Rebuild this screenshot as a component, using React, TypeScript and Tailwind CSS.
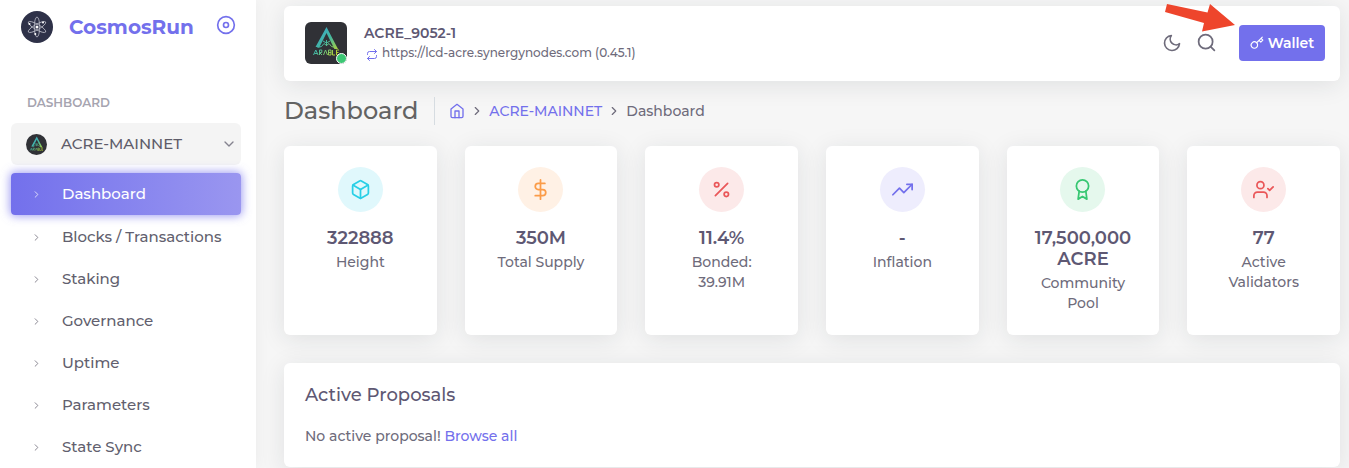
import type { ReactNode } from "react";
import {
  FiAward,
  FiBox,
  FiChevronDown,
  FiChevronRight,
  FiDisc,
  FiDollarSign,
  FiHome,
  FiKey,
  FiMoon,
  FiPercent,
  FiRepeat,
  FiSearch,
  FiTrendingUp,
  FiUserCheck,
} from "react-icons/fi";

const menu = ["Dashboard", "Blocks / Transactions", "Staking", "Governance", "Uptime", "Parameters", "State Sync"];

type Stat = { icon: ReactNode; tint: string; value: string; label: string };

const stats: Stat[] = [
  { icon: <FiBox />, tint: "bg-[#e0f8fc] text-[#28cfe6]", value: "322888", label: "Height" },
  { icon: <FiDollarSign />, tint: "bg-[#fff1e5] text-[#fb9c48]", value: "350M", label: "Total Supply" },
  { icon: <FiPercent />, tint: "bg-[#fce9e9] text-[#ea5759]", value: "11.4%", label: "Bonded: 39.91M" },
  { icon: <FiTrendingUp />, tint: "bg-[#eeedfd] text-[#7370ec]", value: "-", label: "Inflation" },
  { icon: <FiAward />, tint: "bg-[#e5f8ed] text-[#37c772]", value: "17,500,000 ACRE", label: "Community Pool" },
  { icon: <FiUserCheck />, tint: "bg-[#fce9e9] text-[#ea5759]", value: "77", label: "Active Validators" },
];

function CosmosLogo() {
  return (
    <svg viewBox="0 0 32 32" className="size-8 shrink-0" aria-hidden="true">
      <circle cx="16" cy="16" r="16" fill="#2e3148" />
      <g fill="none" stroke="#b9bac6" strokeWidth="0.8">
        <ellipse cx="16" cy="16" rx="2.7" ry="10" />
        <ellipse cx="16" cy="16" rx="2.7" ry="10" transform="rotate(60 16 16)" />
        <ellipse cx="16" cy="16" rx="2.7" ry="10" transform="rotate(120 16 16)" />
      </g>
      <g fill="#fff">
        <circle cx="16" cy="16" r="1.5" />
        <circle cx="8.5" cy="13" r="1" />
        <circle cx="22" cy="11.5" r="1" />
        <circle cx="14.3" cy="23" r="1" />
      </g>
    </svg>
  );
}

function ArableLogo({ id, className }: { id: string; className: string }) {
  return (
    <svg viewBox="0 0 42 42" className={className} aria-hidden="true">
      <defs>
        <linearGradient id={id} x1="10" y1="10" x2="32" y2="30" gradientUnits="userSpaceOnUse">
          <stop offset="0" stopColor="#3aa6c9" />
          <stop offset="0.5" stopColor="#45b8a0" />
          <stop offset="1" stopColor="#b5d334" />
        </linearGradient>
      </defs>
      <rect width="42" height="42" fill="#303136" />
      <path fill={`url(#${id})`} d="M21.5 5 33 27h-3.6L21.500 11 14.500 25h-4z" />
      <g fill="none" stroke={`url(#${id})`} strokeWidth="1">
        <path d="M21.500 24v-6M21.500 21l-3.500-2M21.500 21l3.500-2M12.500 25.500l4-1 2.500-3 2.500 2 2.500-2 2.500 3 4 1" />
        <path d="m8.500 33 2.300-5 2.300 5M9.500 31.500h3M14.500 33v-5h2.300v2.500h-2.300l2.500 2.500M18.500 33l2-5 2 5M23.500 28v5h2.500v-5h-2.500M23.500 30.500H26M27.500 28v5h2.500M34 28h-2.500v5H34M31.500 30.500h2" />
      </g>
    </svg>
  );
}

function Sidebar() {
  return (
    <aside className="flex w-64 shrink-0 flex-col bg-white px-[11px] shadow-[0_0_15px_rgba(34,41,47,0.05)]">
      <div className="flex items-center pt-[11px] pl-[10px]">
        <CosmosLogo />
        <a href="#home" className="ml-4 text-xl leading-8 font-bold text-[#7370ec]">
          CosmosRun
        </a>
        <button type="button" aria-label="Collapse menu" className="mr-[9px] mb-1 ml-auto text-[#7370ec]">
          <FiDisc size={20} />
        </button>
      </div>
      <h2 className="mt-[50px] pl-4 text-xs leading-5 font-semibold text-[#a6a4b0]">DASHBOARD</h2>
      <nav className="mt-[10px] mr-1 text-[15px] font-medium">
        <button type="button" className="mb-2 flex h-[42px] w-full items-center rounded-md bg-[#f4f4f4] pr-1 pl-[15px] text-[#5e5c69]">
          <ArableLogo id="group-logo" className="size-[21px] rounded-full" />
          <span className="ml-[14px]">ACRE-MAINNET</span>
          <FiChevronDown size={16} className="ml-auto text-[#85838f]" />
        </button>
        {menu.map((item, index) => (
          <a
            key={item}
            href={`#${index}`}
            aria-current={index === 0 ? "page" : undefined}
            className={
              index === 0
                ? "mb-px flex h-[42px] items-center rounded bg-linear-to-r from-[#7370ec] to-[#9a96f0] pl-5 text-white shadow-[0_0_10px_1px_rgba(115,112,236,0.7)]"
                : "flex h-[42px] items-center pl-5 text-[#625f6e]"
            }
          >
            <FiChevronRight size={11} className="shrink-0 opacity-80" />
            <span className="ml-5 whitespace-nowrap">{item}</span>
          </a>
        ))}
      </nav>
    </aside>
  );
}

function TopBar() {
  return (
    <header className="flex h-[75px] items-center rounded-md bg-white pr-[15px] pb-0.5 pl-[21px] shadow-[0_4px_24px_rgba(34,41,47,0.1)]">
      <div className="relative">
        <ArableLogo id="chain-logo" className="size-[42px] rounded-md" />
        <span className="absolute right-0 bottom-0 size-[11px] rounded-full border border-white bg-[#3cc774]" />
      </div>
      <div className="ml-[17px] text-[#6e6b7b]">
        <p className="text-sm leading-5 font-semibold text-[#5e5873]">ACRE_9052-1</p>
        <p className="flex items-center gap-1 text-xs leading-5 font-medium">
          <FiRepeat size={12} className="mt-1 ml-0.5 text-[#7370ec]" />
          https://lcd-acre.synergynodes.com (0.45.1)
        </p>
      </div>
      <div className="ml-auto flex items-center text-[#6e6b7b]">
        <button type="button" aria-label="Dark mode">
          <FiMoon size={20} />
        </button>
        <button type="button" aria-label="Search" className="ml-[14px]">
          <FiSearch size={21} />
        </button>
        <div className="relative ml-[22px]">
          <button type="button" className="flex h-9 w-[86px] items-center justify-center gap-1 rounded bg-[#7370ec] text-sm font-semibold text-white">
            <FiKey size={14} />
            Wallet
          </button>
          <svg viewBox="0 0 70 28" className="absolute right-full bottom-full mr-1 -mb-[7px] h-7 w-[70px]" aria-hidden="true">
            <path fill="#ee452c" d="M2 0 42.500 8.500 45 0 70 21 37 27.500 39 19 0 8z" />
          </svg>
        </div>
      </div>
    </header>
  );
}

function Breadcrumb() {
  return (
    <div className="mt-4 flex h-7 items-center text-[#6e6b7b]">
      <h1 className="text-2xl leading-7 font-medium text-[#636363]">Dashboard</h1>
      <nav aria-label="Breadcrumb" className="ml-4 flex h-7 items-center border-l border-[#d6dce1] pl-[14px] text-sm font-medium">
        <a href="#home" aria-label="Home" className="text-[#7370ec]">
          <FiHome size={16} />
        </a>
        <FiChevronRight size={14} className="mx-[5px]" />
        <a href="#chain" className="text-[#7370ec]">
          ACRE-MAINNET
        </a>
        <FiChevronRight size={14} className="mx-[5px]" />
        <span>Dashboard</span>
      </nav>
    </div>
  );
}

function StatCard({ icon, tint, value, label }: Stat) {
  return (
    <article className="flex min-h-[189px] flex-col items-center rounded-md bg-white px-5 py-[21px] text-center shadow-[0_4px_24px_rgba(34,41,47,0.1)]">
      <div className={`flex size-[45px] items-center justify-center rounded-full text-[21px] ${tint}`}>{icon}</div>
      <h2 className="mt-4 text-lg leading-[21px] font-semibold text-[#5e5873]">{value}</h2>
      <p className="mt-[3px] px-3 text-sm leading-5 font-medium text-[#6e6b7b]">{label}</p>
    </article>
  );
}

export default function App() {
  return (
    <div className="flex h-screen overflow-hidden bg-[#f6f6f6] font-[Montserrat,Inter,sans-serif]">
      <Sidebar />
      <main className="min-w-0 flex-1 pt-1.5 pr-[9px] pl-7">
        <TopBar />
        <Breadcrumb />
        <section className="mt-[21px] grid grid-cols-6 gap-7">
          {stats.map((stat) => (
            <StatCard key={stat.label} {...stat} />
          ))}
        </section>
        <section className="mt-7 rounded-md bg-white p-[21px] shadow-[0_4px_24px_rgba(34,41,47,0.1)]">
          <h2 className="text-lg leading-[22px] font-medium text-[#5e5873]">Active Proposals</h2>
          <p className="mt-5 text-sm leading-5 font-medium text-[#6e6b7b]">
            No active proposal!{" "}
            <a href="#proposals" className="text-[#7370ec]">
              Browse all
            </a>
          </p>
        </section>
      </main>
    </div>
  );
}
